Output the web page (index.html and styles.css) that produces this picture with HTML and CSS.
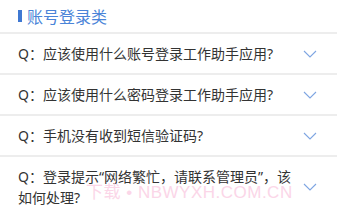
FILE: index.html
```html
<!DOCTYPE html>
<html lang="zh-CN">
<head>
<meta charset="utf-8">
<link rel="stylesheet" href="styles.css">
</head>
<body>
<div class="page">
  <div class="head"><span class="bar"></span><span class="title">账号登录类</span></div>
  <ul class="list">
    <li class="item"><span class="q">Q：应该使用什么账号登录工作助手应用?</span><svg class="chev" viewBox="0 0 14 8"><path d="M1 1 L7 7 L13 1"/></svg></li>
    <li class="item"><span class="q">Q：应该使用什么密码登录工作助手应用?</span><svg class="chev" viewBox="0 0 14 8"><path d="M1 1 L7 7 L13 1"/></svg></li>
    <li class="item"><span class="q">Q：手机没有收到短信验证码?</span><svg class="chev" viewBox="0 0 14 8"><path d="M1 1 L7 7 L13 1"/></svg></li>
    <li class="item"><span class="q">Q：登录提示“网络繁忙，请联系管理员”，该如何处理?</span><svg class="chev" viewBox="0 0 14 8"><path d="M1 1 L7 7 L13 1"/></svg></li>
  </ul>
  <div class="mark">下载 • NBWYXH.COM.CN</div>
</div>
</body>
</html>
```
FILE: styles.css
```css
html, body { margin: 0; padding: 0; background: #fff; }
.page {
  position: relative;
  width: 342px;
  height: 209px;
  overflow: hidden;
  font-family: "Noto Sans", "Noto Sans CJK SC", sans-serif;
}
.head {
  height: 32px;
  display: flex;
  align-items: center;
  padding-left: 18px;
}
.bar {
  width: 4px;
  height: 12px;
  background: #3f78d2;
  margin-right: 5px;
}
.title {
  font-family: "Noto Sans CJK SC", sans-serif;
  font-size: 16px;
  color: #4a84d8;
  line-height: 20px;
}
.list { list-style: none; margin: 0; padding: 0; }
.item {
  border-top: 2px solid #ededed;
  display: flex;
  align-items: center;
  padding: 9px 20px 9px 18px;
  box-sizing: content-box;
  width: 299px;
}
.q {
  flex: 1;
  font-size: 14px;
  line-height: 21px;
  color: #333;
  margin-right: 0;
}
.chev {
  width: 14px;
  height: 8px;
  flex: none;
  fill: none;
  stroke: #7ea5e2;
  stroke-width: 1.1;
}
.mark {
  position: absolute;
  left: 86px;
  top: 178px;
  font-family: "Liberation Sans", "Noto Sans CJK SC", sans-serif;
  font-size: 17px;
  color: #fbd6e8;
  letter-spacing: 0.5px;
  pointer-events: none;
}
```
